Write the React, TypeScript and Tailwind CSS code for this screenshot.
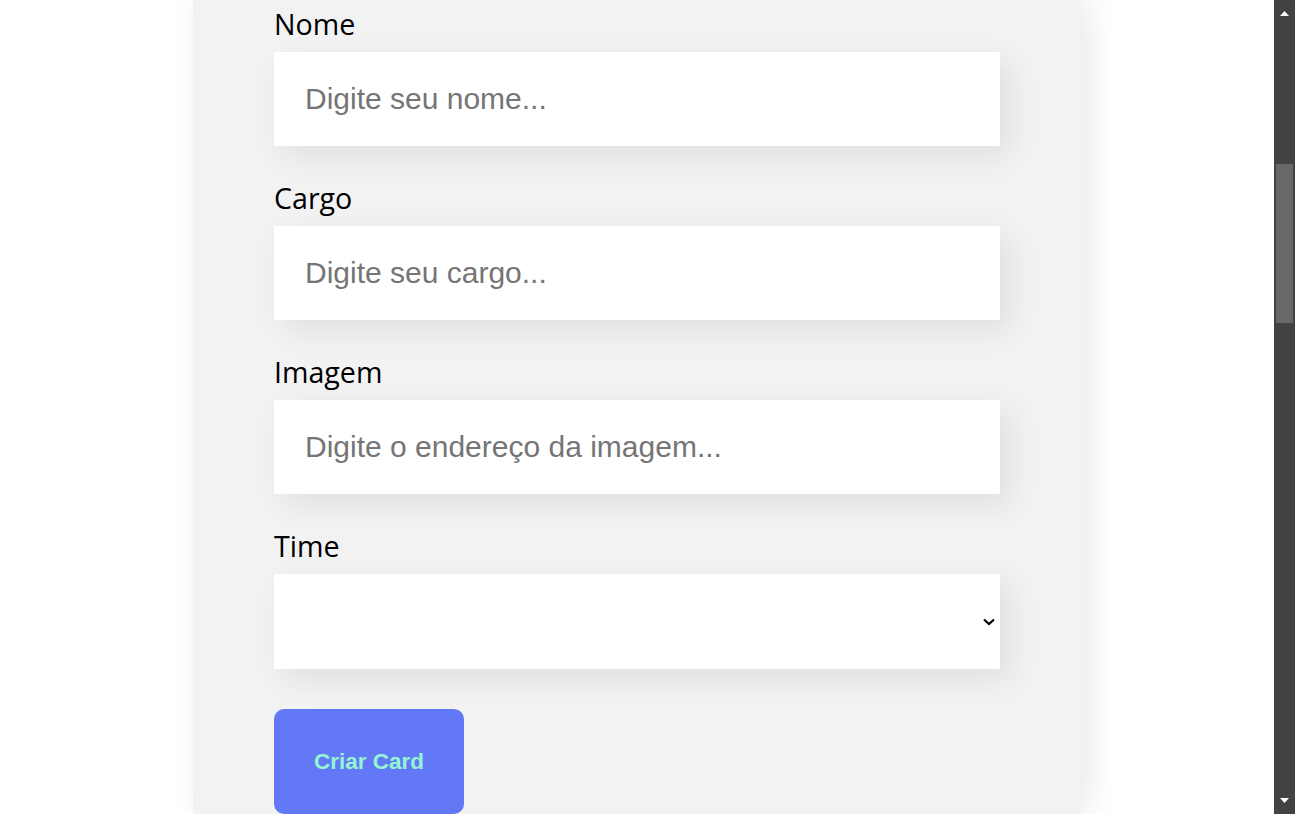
import { ChangeEvent, useState } from 'react';

const fields = [
  { id: 'nome', label: 'Nome', placeholder: 'Digite seu nome...' },
  { id: 'cargo', label: 'Cargo', placeholder: 'Digite seu cargo...' },
  { id: 'imagem', label: 'Imagem', placeholder: 'Digite o endereço da imagem...' },
];

const times = ['', 'Programação', 'Front-End', 'Data Science', 'Devops', 'UX e Design', 'Mobile', 'Inovação e Gestão'];

const App = () => {
  const [values, setValues] = useState<Record<string, string>>({ nome: '', cargo: '', imagem: '', time: '' });

  const update = (id: string) => (e: ChangeEvent<HTMLInputElement | HTMLSelectElement>) =>
    setValues({ ...values, [id]: e.target.value });

  return (
    <div className="flex h-[814px] w-full overflow-hidden bg-white">
      <main className="flex-1 min-w-0">
        <section className="mx-auto h-full w-[888px] bg-[#f2f2f2] px-[81px] pt-[3px] shadow-[8px_0_30px_rgba(0,0,0,0.09)]">
          <form onSubmit={(e) => e.preventDefault()} className="flex flex-col">
            {fields.map((field) => (
              <div key={field.id} className="mb-[31px] flex flex-col">
                <label
                  htmlFor={field.id}
                  className="mb-[9px] pt-[2px] text-[28.6px] leading-[38px] text-black [font-family:'Open_Sans',sans-serif]"
                >
                  {field.label}
                </label>
                <input
                  id={field.id}
                  value={values[field.id]}
                  onChange={update(field.id)}
                  placeholder={field.placeholder}
                  className="h-[94px] w-full bg-white pl-[31px] text-[30px] text-black outline-none shadow-[10px_10px_30px_rgba(0,0,0,0.08)] placeholder:text-[#757575] [font-family:'Liberation_Sans',Arial,sans-serif]"
                />
              </div>
            ))}

            {/* Time */}
            <div className="flex flex-col">
              <label
                htmlFor="time"
                className="mb-[9px] pt-[2px] text-[28.6px] leading-[38px] text-black [font-family:'Open_Sans',sans-serif]"
              >
                Time
              </label>
              <div className="flex h-[95px] w-full items-center bg-white pr-[5px] shadow-[10px_10px_30px_rgba(0,0,0,0.08)]">
                <select
                  id="time"
                  value={values.time}
                  onChange={update('time')}
                  className="h-full flex-1 appearance-none bg-transparent pl-[31px] text-[30px] outline-none [font-family:'Liberation_Sans',Arial,sans-serif]"
                >
                  {times.map((t) => (
                    <option key={t} value={t}>
                      {t}
                    </option>
                  ))}
                </select>
                <svg width="12" height="8" viewBox="0 0 12 8">
                  <path d="M1 1.5 L6 6 L11 1.5" fill="none" stroke="#000" strokeWidth="2.2" />
                </svg>
              </div>
            </div>

            <button
              type="submit"
              className="mt-[40px] h-[105px] w-[190px] rounded-[10px] bg-[#6278f7] text-[22.5px] font-bold text-[#95f5d0] [font-family:'Liberation_Sans',Arial,sans-serif]"
            >
              Criar Card
            </button>
          </form>
        </section>
      </main>

      {/* barra de rolagem */}
      <aside className="flex h-full w-[21px] flex-col bg-[#424242]">
        <div className="flex h-[17px] items-end justify-center pb-[1px]">
          <svg width="9" height="5" viewBox="0 0 9 5">
            <path d="M0 5 L4.5 0 L9 5 Z" fill="#fff" />
          </svg>
        </div>
        <div className="h-[147px]" />
        <div className="mx-[2px] h-[159px] bg-[#686868]" />
        <div className="flex-1" />
        <div className="flex h-[17px] items-start justify-center pt-[1px]">
          <svg width="9" height="5" viewBox="0 0 9 5">
            <path d="M0 0 L4.5 5 L9 0 Z" fill="#fff" />
          </svg>
        </div>
      </aside>
    </div>
  );
};

export default App;
